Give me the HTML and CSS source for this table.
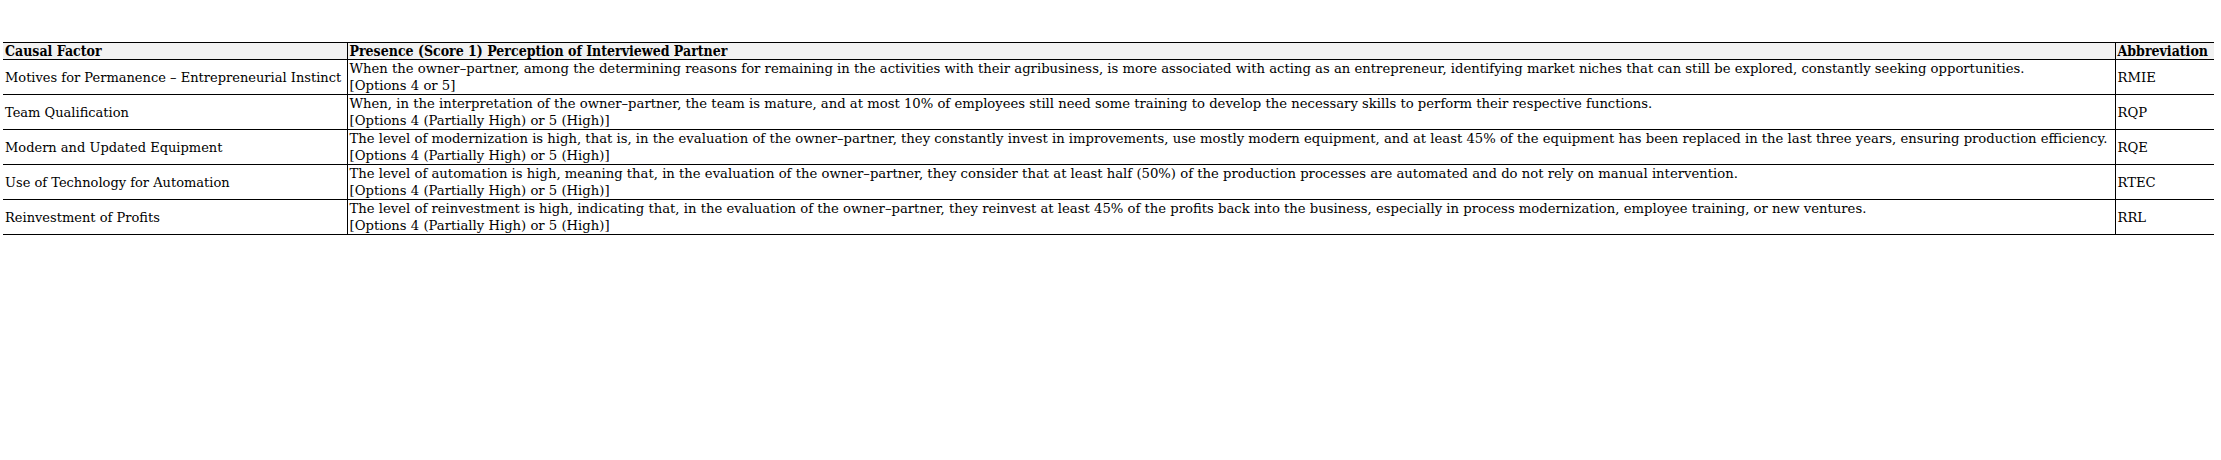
FILE: index.html
```html
<!DOCTYPE html>
<html>
<head>
<meta charset="utf-8">
<link rel="stylesheet" href="styles.css">
</head>
<body>
<div class="page">
<table class="grid">
  <colgroup>
    <col class="c-factor">
    <col class="c-desc">
    <col class="c-abbr">
  </colgroup>
  <thead>
    <tr>
      <th>Causal Factor</th>
      <th class="mid">Presence (Score 1) Perception of Interviewed Partner</th>
      <th class="last">Abbreviation</th>
    </tr>
  </thead>
  <tbody>
    <tr>
      <td class="factor">Motives for Permanence – Entrepreneurial Instinct</td>
      <td class="desc mid"><div>When the owner–partner, among the determining reasons for remaining in the activities with their agribusiness, is more associated with acting as an entrepreneur, identifying market niches that can still be explored, constantly seeking opportunities.</div><div>[Options 4 or 5]</div></td>
      <td class="abbr last">RMIE</td>
    </tr>
    <tr>
      <td class="factor">Team Qualification</td>
      <td class="desc mid"><div>When, in the interpretation of the owner–partner, the team is mature, and at most 10% of employees still need some training to develop the necessary skills to perform their respective functions.</div><div>[Options 4 (Partially High) or 5 (High)]</div></td>
      <td class="abbr last">RQP</td>
    </tr>
    <tr>
      <td class="factor">Modern and Updated Equipment</td>
      <td class="desc mid"><div>The level of modernization is high, that is, in the evaluation of the owner–partner, they constantly invest in improvements, use mostly modern equipment, and at least 45% of the equipment has been replaced in the last three years, ensuring production efficiency.</div><div>[Options 4 (Partially High) or 5 (High)]</div></td>
      <td class="abbr last">RQE</td>
    </tr>
    <tr>
      <td class="factor">Use of Technology for Automation</td>
      <td class="desc mid"><div>The level of automation is high, meaning that, in the evaluation of the owner–partner, they consider that at least half (50%) of the production processes are automated and do not rely on manual intervention.</div><div>[Options 4 (Partially High) or 5 (High)]</div></td>
      <td class="abbr last">RTEC</td>
    </tr>
    <tr>
      <td class="factor">Reinvestment of Profits</td>
      <td class="desc mid"><div>The level of reinvestment is high, indicating that, in the evaluation of the owner–partner, they reinvest at least 45% of the profits back into the business, especially in process modernization, employee training, or new ventures.</div><div>[Options 4 (Partially High) or 5 (High)]</div></td>
      <td class="abbr last">RRL</td>
    </tr>
  </tbody>
</table>
</div>
</body>
</html>
```

FILE: styles.css
```css
html, body {
  margin: 0;
  padding: 0;
  background: #ffffff;
}

.page {
  padding: 42px 7px 0 3px;
}

.grid {
  width: 2211px;
  border-collapse: collapse;
  table-layout: fixed;
  font-family: "DejaVu Serif", serif;
  color: #000;
}

.c-factor { width: 344px; }
.c-desc { width: 1768px; }
.c-abbr { width: 99px; }

.grid th {
  background: #f2f2f2;
  font-family: "DejaVu Serif Condensed", "DejaVu Serif", serif;
  font-weight: bold;
  font-size: 14px;
  line-height: 16px;
  height: 16px;
  text-align: left;
  padding: 0 2px;
  border-top: 1px solid #000;
  border-bottom: 1px solid #000;
  white-space: nowrap;
  vertical-align: middle;
}

.grid td {
  font-size: 13.2px;
  line-height: 17px;
  height: 34px;
  padding: 0 2px;
  border-bottom: 1px solid #000;
  white-space: nowrap;
  overflow: visible;
}

.mid {
  border-left: 1px solid #000;
  border-right: 1px solid #000;
}

.grid td.factor {
  vertical-align: middle;
  font-size: 13px;
}

.desc {
  vertical-align: top;
  padding-top: 2px;
}

.abbr {
  vertical-align: middle;
}
```
